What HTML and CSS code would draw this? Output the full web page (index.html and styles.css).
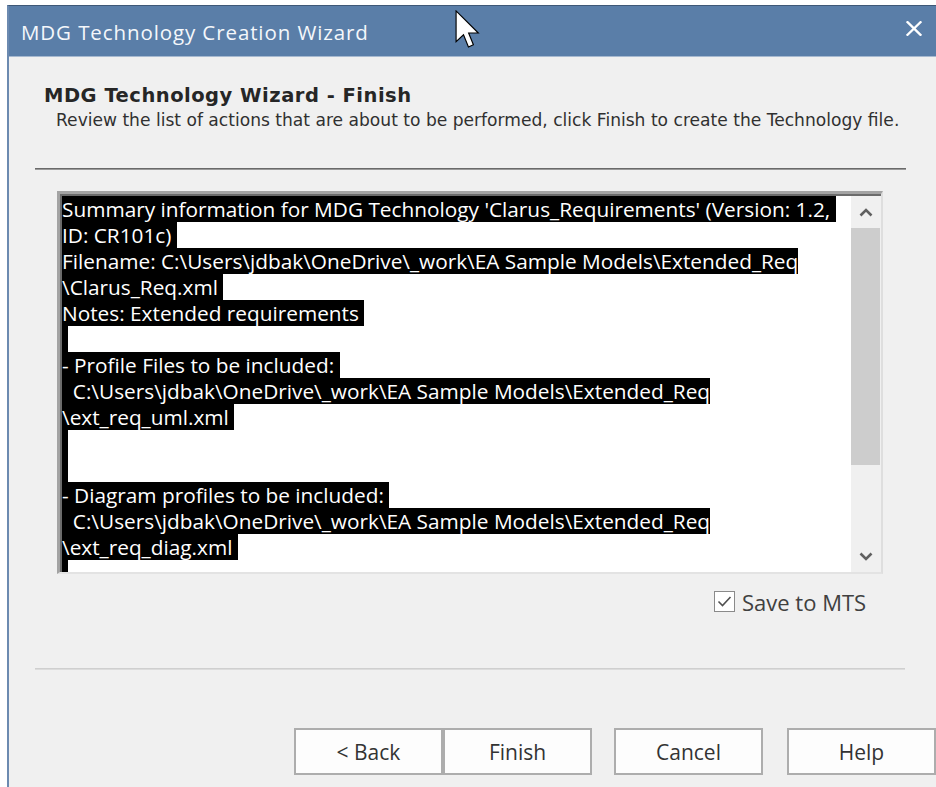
FILE: index.html
```html
<!DOCTYPE html>
<html lang="en">
<head>
<meta charset="utf-8">
<title>MDG Technology Creation Wizard</title>
<link rel="stylesheet" href="styles.css">
</head>
<body>
<div class="window">
  <div class="titlebar">
    <span class="title">MDG Technology Creation Wizard</span>
    <svg class="close" width="16" height="15" viewBox="0 0 16 15" aria-label="Close">
      <path d="M1.5 1.2 L14.5 13.8 M14.5 1.2 L1.5 13.8" stroke="#fff" stroke-width="2.3" stroke-linecap="square" fill="none"/>
    </svg>
  </div>

  <div class="client">
    <div class="page-head">
      <h1 class="page-title">MDG Technology Wizard - Finish</h1>
      <p class="page-desc">Review the list of actions that are about to be performed, click Finish to create the Technology file.</p>
    </div>

    <div class="rule rule-dark"></div>

    <div class="summary">
      <div class="summary-text">
        <div class="ln"><span class="sel">Summary information for MDG Technology 'Clarus_Requirements' (Version: 1.2, </span></div>
        <div class="ln"><span class="sel">ID: CR101c) </span></div>
        <div class="ln"><span class="sel">Filename: C:\Users\jdbak\OneDrive\_work\EA Sample Models\Extended_Req</span></div>
        <div class="ln"><span class="sel">\Clarus_Req.xml </span></div>
        <div class="ln"><span class="sel">Notes: Extended requirements </span></div>
        <div class="ln"><span class="sel mark"></span></div>
        <div class="ln"><span class="sel">- Profile Files to be included: </span></div>
        <div class="ln"><span class="sel">  C:\Users\jdbak\OneDrive\_work\EA Sample Models\Extended_Req</span></div>
        <div class="ln"><span class="sel">\ext_req_uml.xml </span></div>
        <div class="ln"><span class="sel mark"></span></div>
        <div class="ln"><span class="sel mark"></span></div>
        <div class="ln"><span class="sel">- Diagram profiles to be included: </span></div>
        <div class="ln"><span class="sel">  C:\Users\jdbak\OneDrive\_work\EA Sample Models\Extended_Req</span></div>
        <div class="ln"><span class="sel">\ext_req_diag.xml </span></div>
        <div class="ln"><span class="sel mark"></span></div>
      </div>
      <div class="vscroll">
        <div class="sb-btn">
          <svg width="14" height="9" viewBox="0 0 14 9"><path d="M1.5 7.5 L7 2 L12.5 7.5" stroke="#606060" stroke-width="2.6" fill="none"/></svg>
        </div>
        <div class="sb-track">
          <div class="sb-thumb"></div>
        </div>
        <div class="sb-btn">
          <svg width="14" height="9" viewBox="0 0 14 9"><path d="M1.5 1.5 L7 7 L12.5 1.5" stroke="#606060" stroke-width="2.6" fill="none"/></svg>
        </div>
      </div>
    </div>

    <label class="check">
      <span class="check-box">
        <svg width="15" height="13" viewBox="0 0 15 13"><path d="M1.5 6.5 L5.5 10.5 L13.5 2" stroke="#505050" stroke-width="1.6" fill="none"/></svg>
      </span>
      <span class="check-label">Save to MTS</span>
    </label>

    <div class="rule rule-light"></div>

    <div class="buttons">
      <button class="btn">&lt; Back</button>
      <button class="btn">Finish</button>
      <button class="btn btn-gap">Cancel</button>
      <button class="btn btn-gap2">Help</button>
    </div>
  </div>

  <svg class="pointer" width="25" height="39" viewBox="0 0 13 20.5">
    <path d="M0.5 0.5 V16.6 L4.4 13 L7 19.4 L9.6 18.3 L7.1 12.1 H12.2 Z" fill="#fff" stroke="#000" stroke-width="0.6" stroke-linejoin="miter"/>
  </svg>
</div>
</body>
</html>
```

FILE: styles.css
```css
* {
  box-sizing: border-box;
}

html,
body {
  margin: 0;
  padding: 0;
  background: #ffffff;
}

body {
  width: 936px;
  height: 787px;
  overflow: hidden;
  font-family: "Open Sans", "Noto Sans", sans-serif;
}

/* dialog frame */
.window {
  position: relative;
  margin: 5px 0 0 7px;
  height: 782px;
  border-left: 2px solid #6c8ab0;
  border-top: 1px solid #3e5877;
  background: #f0f0f0;
  display: flex;
  flex-direction: column;
}

.titlebar {
  height: 51px;
  flex: none;
  background: #5a7ea8;
  border-bottom: 1px solid #a6b9d0;
  display: flex;
  align-items: center;
  padding-left: 12px;
  color: #f4f7fb;
}

.title {
  font-size: 20.5px;
  letter-spacing: 0.9px;
  margin-top: 2px;
}

.close {
  margin-left: auto;
  margin-right: 14px;
  margin-top: -6px;
}

.pointer {
  position: absolute;
  left: 446px;
  top: 4px;
}

/* client area */
.client {
  flex: 1;
  display: flex;
  flex-direction: column;
  padding-top: 28px;
}

.page-head {
  padding-left: 35px;
}

.page-title {
  margin: 0;
  font-family: "DejaVu Sans", "Open Sans", sans-serif;
  font-size: 19.5px;
  line-height: 21px;
  font-weight: 700;
  color: #262626;
  letter-spacing: 0.5px;
}

.page-desc {
  margin: 5px 0 0 12px;
  font-family: "DejaVu Sans", "Open Sans", sans-serif;
  font-size: 17.1px;
  line-height: 18px;
  color: #303030;
}

.rule {
  height: 2px;
  margin-left: 26px;
}

.rule-dark {
  margin-top: 39px;
  margin-right: 30px;
  border-top: 1px solid #6a6a6a;
  border-bottom: 1px solid #9a9a9a;
}

.rule-light {
  margin-top: 56px;
  margin-right: 31px;
  border-top: 1px solid #cfcfcf;
  border-bottom: 1px solid #dcdcdc;
}

/* summary edit box */
.summary {
  margin: 21px 53px 0 48px;
  height: 383px;
  display: flex;
  background: #ffffff;
  border-style: solid;
  border-width: 3px 2px 2px 3px;
  border-color: #a3a3a3 #dedede #e3e3e3 #a3a3a3;
  box-shadow: inset 2px 2px 0 #6b6b6b;
  padding: 2px 0 0 2px;
}

.summary-text {
  flex: 1;
  overflow: hidden;
  font-size: 20.8px;
  line-height: 26px;
  color: #ffffff;
}

.ln {
  height: 26px;
  white-space: pre;
}

.sel {
  display: inline-block;
  height: 26px;
  background: #000000;
  vertical-align: top;
}

.sel.mark {
  width: 6px;
}

.vscroll {
  width: 30px;
  flex: none;
  display: flex;
  flex-direction: column;
  background: #f0f0f0;
}

.sb-btn {
  height: 32px;
  flex: none;
  display: flex;
  align-items: center;
  justify-content: center;
}

.sb-track {
  flex: 1;
}

.sb-thumb {
  height: 237px;
  margin-right: 1px;
  background: #cdcdcd;
}

/* checkbox row */
.check {
  margin-top: 17px;
  margin-left: 705px;
  display: flex;
  align-items: center;
  height: 21px;
}

.check-box {
  width: 21px;
  height: 21px;
  border: 1px solid #8a8a8a;
  background: #ffffff;
  display: flex;
  align-items: center;
  justify-content: center;
}

.check-label {
  margin-left: 7px;
  font-size: 22px;
  color: #404040;
}

/* command buttons */
.buttons {
  margin-top: 58px;
  margin-left: 285px;
  display: flex;
}

.btn {
  width: 149px;
  height: 47px;
  background: #fdfdfd;
  border: 2px solid #adadad;
  font-family: "Open Sans", "Noto Sans", sans-serif;
  font-size: 21px;
  color: #333333;
  padding: 0;
}

.btn-gap {
  margin-left: 22px;
}

.btn-gap2 {
  margin-left: 24px;
}
```
